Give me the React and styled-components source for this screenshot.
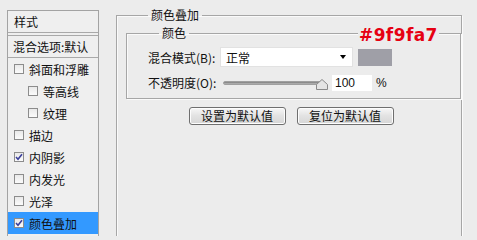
import React from "react";
import styled, { createGlobalStyle } from "styled-components";

const GlobalStyle = createGlobalStyle`
  html, body {
    margin: 0;
    padding: 0;
    background: #ececec;
    overflow: hidden;
  }
  body {
    font-family: "Noto Sans CJK SC", "Liberation Sans", sans-serif;
    font-size: 12px;
    color: #111;
  }
`;

const styles = [
  { label: "斜面和浮雕", checked: false },
  { label: "等高线", checked: false, indent: true },
  { label: "纹理", checked: false, indent: true },
  { label: "描边", checked: false },
  { label: "内阴影", checked: true },
  { label: "内发光", checked: false },
  { label: "光泽", checked: false },
  { label: "颜色叠加", checked: true, active: true },
];

const App = () => {
  return (
    <>
      <GlobalStyle />
      <Dialog>
        <StyleList>
          <HeaderRow>样式</HeaderRow>
          <BlendRow>混合选项:默认</BlendRow>
          {styles.map((s) => (
            <StyleRow key={s.label} $indent={s.indent} $active={s.active}>
              <CheckBox checked={s.checked} />
              <span>{s.label}</span>
            </StyleRow>
          ))}
        </StyleList>

        <Main>
          <Group>
            <Legend>颜色叠加</Legend>
            <InnerGroup>
              <InnerLegend>颜色</InnerLegend>
              <HexNote>#9f9fa7</HexNote>
              <FieldRow>
                <Label>混合模式(<u>B</u>):</Label>
                <Select>
                  <span>正常</span>
                  <Arrow />
                </Select>
                <Swatch $color="#9f9fa7" />
              </FieldRow>
              <FieldRow>
                <Label>不透明度(O):</Label>
                <Slider>
                  <Track />
                  <Thumb />
                </Slider>
                <NumberBox>100</NumberBox>
                <Unit>%</Unit>
              </FieldRow>
            </InnerGroup>
            <Buttons>
              <Button>设置为默认值</Button>
              <Button>复位为默认值</Button>
            </Buttons>
          </Group>
        </Main>
      </Dialog>
    </>
  );
};

const CheckBox = ({ checked }) => (
  <Box>
    {checked && (
      <svg width="8" height="8" viewBox="0 0 8 8">
        <path d="M1 4 L3 6.2 L7 1.2" fill="none" stroke="#3a3f9a" strokeWidth="1.6" />
      </svg>
    )}
  </Box>
);

const Thumb = () => (
  <ThumbWrap>
    <svg width="12" height="11" viewBox="0 0 12 11">
      <path d="M0.5 10.5 L0.5 5.5 L6 0.5 L11.5 5.5 L11.5 10.5 Z" fill="#e4e4e4" stroke="#8a8a8a" />
    </svg>
  </ThumbWrap>
);

const Dialog = styled.div`
  display: flex;
  align-items: flex-start;
  padding: 10px 0 0 7px;
  height: 236px;
  box-sizing: border-box;
  overflow: hidden;
`;

const StyleList = styled.div`
  width: 90px;
  height: 240px;
  border: 1px solid #a3a3a3;
  background: #efefef;
  flex-shrink: 0;
`;

const HeaderRow = styled.div`
  height: 21px;
  line-height: 21px;
  padding-left: 6px;
  border-bottom: 1px solid #a9a9a9;
  margin-bottom: 2px;
`;

const BlendRow = styled.div`
  height: 21px;
  line-height: 21px;
  padding-left: 5px;
  border-top: 1px solid #a9a9a9;
  border-bottom: 1px solid #a9a9a9;
  white-space: nowrap;
`;

const StyleRow = styled.div`
  display: flex;
  align-items: center;
  height: 22px;
  padding-left: ${(p) => (p.$indent ? 20 : 6)}px;
  gap: 5px;
  background: ${(p) => (p.$active ? "#3399ff" : "transparent")};
`;

const Box = styled.div`
  width: 8px;
  height: 8px;
  border: 1px solid #8c8c8c;
  background: linear-gradient(#e9e9e9, #fbfbfb);
  display: flex;
  align-items: center;
  justify-content: center;
`;

const Main = styled.div`
  margin-left: 17px;
  margin-top: -2px;
  flex: 1;
`;

const Group = styled.fieldset`
  margin: 0;
  padding: 0 0 0 9px;
  width: 343px;
  height: 260px;
  border: 1px solid #a6a6a6;
  box-shadow: inset 1px 1px #fafafa, 1px 1px #fafafa;
  box-sizing: border-box;
`;

const Legend = styled.legend`
  margin-left: 22px;
  padding: 0 3px;
  line-height: 14px;
`;

const InnerGroup = styled.fieldset`
  position: relative;
  margin: 4px 0 0 0;
  padding: 7px 0 7px 21px;
  width: 335px;
  border: 1px solid #a6a6a6;
  box-shadow: inset 1px 1px #fafafa, 1px 1px #fafafa;
  box-sizing: border-box;
  display: flex;
  flex-direction: column;
  gap: 7px;
`;

const InnerLegend = styled.legend`
  margin-left: 11px;
  padding: 0 3px;
  line-height: 14px;
`;

const HexNote = styled.span`
  position: absolute;
  left: 231px;
  top: -13px;
  padding: 0 1px;
  background: #ececec;
  color: #e60012;
  font-family: "DejaVu Sans", sans-serif;
  font-weight: bold;
  font-size: 17px;
  line-height: 17px;
  letter-spacing: 0.4px;
`;

const FieldRow = styled.div`
  display: flex;
  align-items: center;
`;

const Label = styled.span`
  width: 72px;
  white-space: nowrap;
  u {
    text-decoration: none;
  }
`;

const Select = styled.div`
  width: 133px;
  height: 20px;
  box-sizing: border-box;
  background: #fff;
  border: 1px solid #e2e2e2;
  display: flex;
  align-items: center;
  justify-content: space-between;
  padding: 0 6px 0 5px;
`;

const Arrow = styled.span`
  width: 0;
  height: 0;
  border-left: 3.5px solid transparent;
  border-right: 3.5px solid transparent;
  border-top: 4px solid #000;
`;

const Swatch = styled.div`
  width: 34px;
  height: 17px;
  margin-left: 5px;
  background: ${(p) => p.$color};
`;

const Slider = styled.div`
  position: relative;
  width: 108px;
  height: 16px;
  display: flex;
  align-items: center;
`;

const Track = styled.div`
  margin-left: 3px;
  width: 99px;
  height: 4px;
  border-radius: 2px;
  background: linear-gradient(#7c7c7c, #b9b9b9);
  border: 1px solid #a0a0a0;
  box-sizing: border-box;
`;

const ThumbWrap = styled.div`
  position: absolute;
  left: 96px;
  top: 4px;
  display: flex;
`;

const NumberBox = styled.div`
  width: 40px;
  height: 16px;
  margin-left: 4px;
  background: #fff;
  box-sizing: border-box;
  padding-left: 3px;
  line-height: 16px;
  font-family: "Liberation Sans", sans-serif;
`;

const Unit = styled.span`
  margin-left: 4px;
  font-family: "Liberation Sans", sans-serif;
`;

const Buttons = styled.div`
  display: flex;
  justify-content: center;
  gap: 11px;
  margin-top: 8px;
  padding-right: 5px;
`;

const Button = styled.button`
  width: 97px;
  height: 18px;
  padding: 0;
  font-family: "Noto Sans CJK SC", sans-serif;
  font-size: 12px;
  line-height: 16px;
  color: #111;
  border: 1px solid #6f6f6f;
  border-radius: 3px;
  background: linear-gradient(#f7f7f7, #e2e2e2 50%, #d6d6d6);
  box-shadow: inset 0 0 0 1px #fdfdfd;
`;

export default App;
